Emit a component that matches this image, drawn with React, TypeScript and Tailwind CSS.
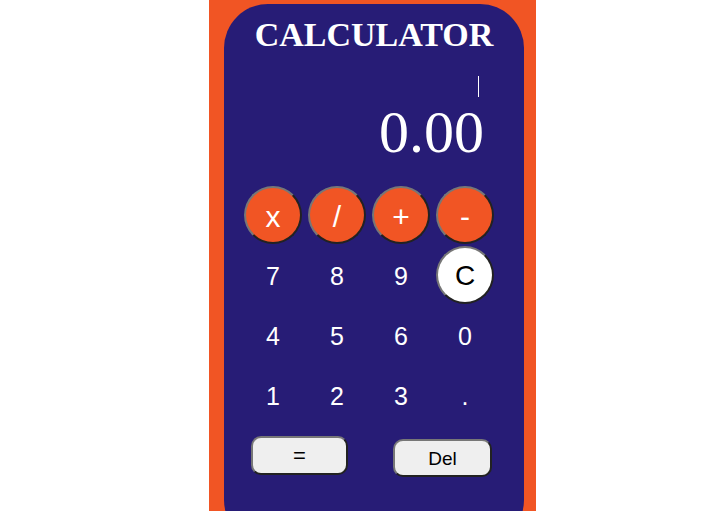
const ops = ["x", "/", "+", "-"];
const digits = ["7", "8", "9", "C", "4", "5", "6", "0", "1", "2", "3", "."];

const circle =
  "flex h-[58px] w-[58px] items-center justify-center rounded-full";

export default function App() {
  return (
    <div className="flex h-[511px] w-[710px] overflow-hidden bg-white pl-[209px]">
      <div className="w-[327px] bg-[#f15524] pl-[15px] pt-[4px]">
        <div className="h-[540px] w-[300px] rounded-[44px] bg-[#271c76] pt-[14px]">
          <h1 className="text-center font-['Liberation_Serif',serif] text-[34px] font-bold leading-[34px] text-white">
            CALCULATOR
          </h1>

          <div className="mt-[24px] flex justify-end pr-[45px]">
            <div className="h-[21px] w-px bg-white" />
          </div>

          <div className="mt-[5px] pr-[40px] text-right font-['Liberation_Serif',serif] text-[60px] leading-[60px] text-white">
            0.00
          </div>

          <div className="mt-[24px] grid grid-cols-[repeat(4,58px)] gap-x-[6px] gap-y-[2px] pl-[20px] font-['Liberation_Sans',Arial,sans-serif]">
            {ops.map((o) => (
              <button
                key={o}
                className={`${circle} border-2 border-[#777] bg-[#f15524] pt-[2px] text-[30px] text-white [border-style:outset]`}
              >
                {o}
              </button>
            ))}
            {digits.map((d) =>
              d === "C" ? (
                <button
                  key={d}
                  className={`${circle} border-2 border-[#777] bg-white pt-[2px] text-[28px] text-black [border-style:outset]`}
                >
                  C
                </button>
              ) : (
                <button key={d} className={`${circle} pt-[3px] text-[25px] text-white`}>
                  {d}
                </button>
              )
            )}
          </div>

          <div className="mt-[12px] flex items-start pl-[27px] font-['Liberation_Sans',Arial,sans-serif] text-black">
            <button className="h-[39px] w-[97px] rounded-[10px] border-2 border-[#777] bg-[#efefef] text-[22px] [border-style:outset]">
              =
            </button>
            <button className="ml-[45px] mt-[3px] h-[38px] w-[99px] rounded-[10px] border-2 border-[#777] bg-[#efefef] pt-[2px] text-[19px] [border-style:outset]">
              Del
            </button>
          </div>
        </div>
      </div>
    </div>
  );
}
